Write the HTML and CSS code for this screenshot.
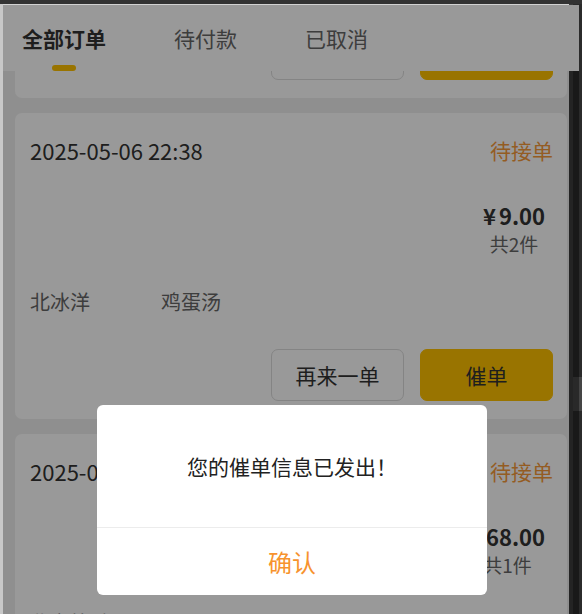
FILE: index.html
```html
<!DOCTYPE html>
<html lang="zh-CN">
<head>
  <meta charset="UTF-8">
  <title>我的订单</title>
  <meta name="viewport" content="width=device-width, initial-scale=1.0">
  <link rel="stylesheet" href="styles.css">
</head>
<body>
  <div class="topbar"></div>
  <div class="shell">
    <div class="shell-edge"></div>
    <div class="page">
      <div class="tabs">
        <div class="tab active">全部订单<span class="tab-line"></span></div>
        <div class="tab">待付款</div>
        <div class="tab">已取消</div>
      </div>

      <div class="list">
        <div class="card">
          <div class="card-head">
            <span class="time">2025-05-06 22:41</span>
            <span class="status">待接单</span>
          </div>
          <div class="goods">
            <div class="items">
              <div class="item"><div class="thumb"></div><div class="name">可乐</div></div>
            </div>
            <div class="price-box">
              <div class="price"><span class="yen">¥</span>9.00</div>
              <div class="count">共1件</div>
            </div>
          </div>
          <div class="actions">
            <button class="btn">再来一单</button>
            <button class="btn btn-main">催单</button>
          </div>
        </div>

        <div class="card">
          <div class="card-head">
            <span class="time">2025-05-06 22:38</span>
            <span class="status">待接单</span>
          </div>
          <div class="goods">
            <div class="items">
              <div class="item"><div class="thumb"></div><div class="name">北冰洋</div></div>
              <div class="item"><div class="thumb"></div><div class="name">鸡蛋汤</div></div>
            </div>
            <div class="price-box">
              <div class="price"><span class="yen">¥</span>9.00</div>
              <div class="count">共2件</div>
            </div>
          </div>
          <div class="actions">
            <button class="btn">再来一单</button>
            <button class="btn btn-main">催单</button>
          </div>
        </div>

        <div class="card">
          <div class="card-head">
            <span class="time">2025-05-06 20:15</span>
            <span class="status">待接单</span>
          </div>
          <div class="goods">
            <div class="items">
              <div class="item"><div class="thumb"></div><div class="name">北京烤鸭</div></div>
            </div>
            <div class="price-box">
              <div class="price"><span class="yen">¥</span>68.00</div>
              <div class="count">共1件</div>
            </div>
          </div>
          <div class="actions">
            <button class="btn">再来一单</button>
            <button class="btn btn-main">催单</button>
          </div>
        </div>
      </div>

      <div class="mask">
        <div class="dialog">
          <div class="dialog-msg">您的催单信息已发出！</div>
          <div class="dialog-btn">确认</div>
        </div>
      </div>
    </div>
    <div class="scrollbar"><div class="thumb-bar"></div></div>
  </div>
</body>
</html>
```

FILE: styles.css
```css
body {
  margin: 0;
  height: 614px;
  overflow: hidden;
  background: #2d2d2d;
  font-family: "Noto Sans CJK SC", "Noto Sans", sans-serif;
  color: #333;
}
.topbar {
  height: 4px;
  background: #333;
}
.shell {
  display: flex;
  height: 610px;
  position: relative;
}
.shell-edge {
  width: 3px;
  background: #c8c8c8;
}
.page {
  position: relative;
  width: 576px;
  overflow: hidden;
  background: #efefef;
  border-top: 1px solid #d2d2d2;
}
.tabs {
  position: absolute;
  top: 0;
  left: 0;
  right: 0;
  height: 66px;
  background: white;
  display: flex;
  gap: 68px;
  padding-left: 19px;
  z-index: 2;
}
.tab {
  position: relative;
  padding-top: 18px;
  font-size: 21px;
  line-height: 30px;
  color: #666;
}
.tab.active {
  font-weight: bold;
  color: #333;
}
.tab-line {
  position: absolute;
  left: 50%;
  bottom: 0;
  width: 24px;
  height: 6px;
  margin-left: -12px;
  border-radius: 3px;
  background: #ffc200;
}
.list {
  margin-top: -213px;
  padding: 0 12px;
  display: flex;
  flex-direction: column;
  gap: 15px;
}
.card {
  background: white;
  border-radius: 7px;
  padding: 22px 14px 18px 15px;
}
.card-head {
  display: flex;
  justify-content: space-between;
  align-items: center;
  height: 30px;
}
.time {
  font-size: 22px;
  color: #333;
}
.status {
  font-size: 21px;
  color: #f79a3a;
}
.goods {
  display: flex;
  justify-content: space-between;
  padding-top: 10px;
}
.items {
  display: flex;
  gap: 31px;
}
.item {
  width: 100px;
}
.thumb {
  height: 112px;
}
.name {
  font-size: 20px;
  line-height: 30px;
  color: #666;
  white-space: nowrap;
}
.price-box {
  display: flex;
  flex-direction: column;
  align-items: center;
  margin-top: 25px;
  margin-right: 8px;
}
.price {
  font-size: 22px;
  font-weight: bold;
  line-height: 30px;
  color: #333;
}
.yen {
  margin-right: 3px;
}
.count {
  font-size: 19px;
  line-height: 28px;
  color: #666;
}
.actions {
  display: flex;
  justify-content: flex-end;
  gap: 16px;
  margin-top: 32px;
}
.btn {
  width: 133px;
  height: 52px;
  border: 1px solid #dcdcdc;
  border-radius: 7px;
  background: white;
  font-family: inherit;
  font-size: 21px;
  color: #333;
}
.btn-main {
  background: #ffc200;
  border-color: #ffc200;
}
.mask {
  position: absolute;
  inset: 0;
  background: rgba(0,0,0,0.4);
  z-index: 5;
  display: flex;
  flex-direction: column;
  justify-content: flex-end;
  align-items: center;
  padding-bottom: 19px;
}
.dialog {
  width: 390px;
  margin-left: 2px;
  background: white;
  border-radius: 6px;
  overflow: hidden;
}
.dialog-msg {
  height: 122px;
  display: flex;
  align-items: center;
  justify-content: center;
  font-size: 21px;
  color: #222;
  border-bottom: 1px solid #ececec;
}
.dialog-btn {
  height: 67px;
  line-height: 67px;
  text-align: center;
  font-size: 24px;
  color: #f7932e;
}
.scrollbar {
  position: absolute;
  top: 0;
  right: 0;
  bottom: 0;
  width: 9px;
  background: #2b2b2b;
  border-left: 4px solid #3d3d3d;
}
.thumb-bar {
  margin-top: 373px;
  height: 34px;
  background: #454545;
}
```
